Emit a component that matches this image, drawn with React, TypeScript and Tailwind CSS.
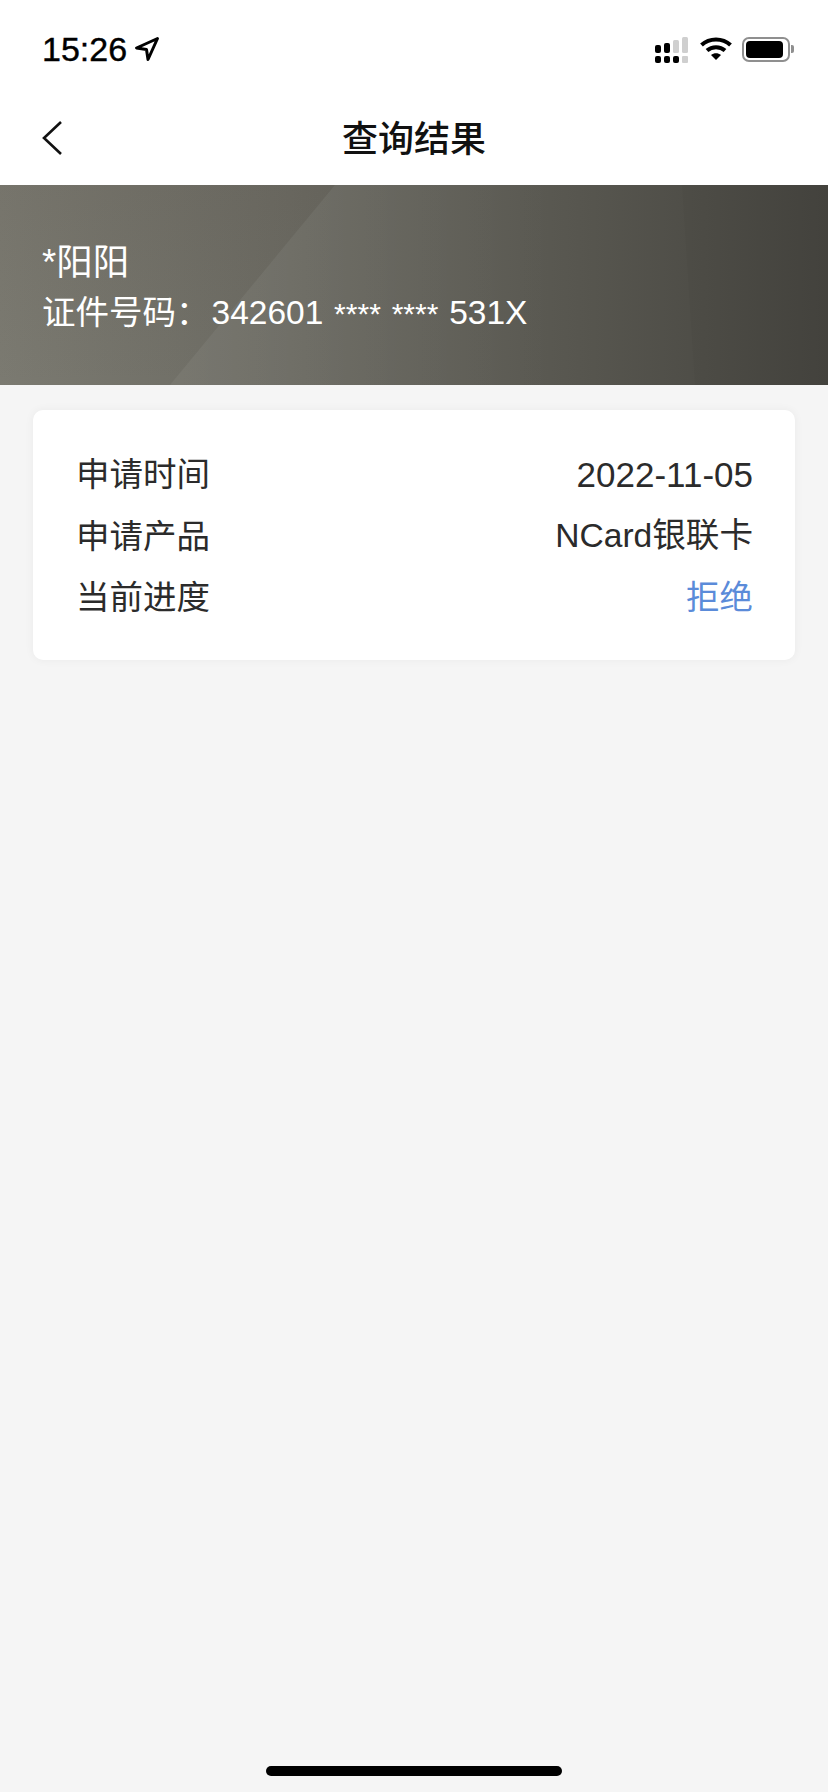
const cjk = "font-['Liberation_Sans','Noto_Sans_CJK_SC',sans-serif]";

const rows = [
  { label: "申请时间", value: "2022-11-05", tone: "text-[#2b2b2b] text-[35px]" },
  { label: "申请产品", value: "NCard银联卡", tone: "text-[#2b2b2b] text-[33.6px]" },
  { label: "当前进度", value: "拒绝", tone: "text-[#5b8bd9]" },
];

function LocationArrow() {
  return (
    <svg width="26" height="26" viewBox="0 0 26 26" fill="none" className="ml-[7px]">
      <path d="M23.5 2.5 L2.5 12 L12.5 13.5 L14 23.5 Z" stroke="#000" strokeWidth="3" strokeLinejoin="round" />
    </svg>
  );
}

function StatusIcons() {
  return (
    <div className="flex items-center">
      <svg width="34" height="26" viewBox="0 0 34 26" className="translate-y-[1px]">
        <rect x="0" y="8" width="6" height="8" rx="2" fill="#000" />
        <rect x="9" y="6" width="6" height="10" rx="2" fill="#000" />
        <rect x="18" y="3" width="6" height="13" rx="1.5" fill="#cfcfcf" />
        <rect x="27" y="0" width="6" height="16" rx="1.5" fill="#cfcfcf" />
        <rect x="0" y="19" width="6" height="7" rx="2" fill="#000" />
        <rect x="9" y="19" width="6" height="7" rx="2" fill="#000" />
        <rect x="18" y="19" width="6" height="7" rx="2" fill="#000" />
        <rect x="27" y="19" width="6" height="7" rx="1" fill="#cfcfcf" />
      </svg>
      <svg width="32" height="24" viewBox="0 0 32 24" className="ml-[11px]">
        <path d="M1.5 8 C9.5 0.5 22.5 0.5 30.5 8" stroke="#000" strokeWidth="4" fill="none" />
        <path d="M7 13.5 C12 9 20 9 25 13.5" stroke="#000" strokeWidth="4" fill="none" />
        <path d="M11 18 C14 15.5 18 15.5 21 18 L16 23 Z" fill="#000" />
      </svg>
      <div className="ml-[10px] flex items-center">
        <div className="flex h-[25px] w-[48px] items-center rounded-[7px] border-2 border-[#8f8f8f] p-[2px]">
          <div className="h-full w-[37px] rounded-[4px] bg-black" />
        </div>
        <div className="ml-[1px] h-[8px] w-[3px] rounded-r-[2px] bg-[#8f8f8f]" />
      </div>
    </div>
  );
}

export default function App() {
  return (
    <div className={`flex min-h-[1792px] flex-col bg-[#f5f5f5] ${cjk}`}>
      <div className="bg-white">
        <div className="flex h-[98px] items-center justify-between pl-[42px] pr-[34px]">
          <div className="flex items-center text-[34px] font-medium leading-none text-black">
            <span className="[-webkit-text-stroke:0.4px_#000]">15:26</span>
            <LocationArrow />
          </div>
          <StatusIcons />
        </div>
        <div className="relative flex h-[87px] items-center justify-center pb-[4px]">
          <svg width="22" height="36" viewBox="0 0 22 36" fill="none" className="absolute left-[41px] top-[22px]">
            <path d="M20 2 L3 18 L20 34" stroke="#111" strokeWidth="2.6" />
          </svg>
          <h1 className="text-[36px] font-medium leading-none text-[#111]">查询结果</h1>
        </div>
      </div>

      <div className="relative h-[200px] overflow-hidden bg-[linear-gradient(90deg,#7b7a71_0%,#6b6a62_35%,#57564f_70%,#45443f_100%)]">
        <svg width="828" height="200" viewBox="0 0 828 200" className="absolute inset-0">
          <defs>
            <linearGradient id="sheen" x1="0" y1="0" x2="1" y2="0">
              <stop offset="0" stopColor="#fff" stopOpacity="0.05" />
              <stop offset="0.6" stopColor="#fff" stopOpacity="0" />
            </linearGradient>
            <linearGradient id="shade" x1="0" y1="0" x2="0" y2="1">
              <stop offset="0" stopColor="#4a4038" stopOpacity="0.1" />
              <stop offset="1" stopColor="#4a4038" stopOpacity="0" />
            </linearGradient>
          </defs>
          <path d="M335 0 L828 0 L828 200 L170 200 Z" fill="url(#sheen)" />
          <path d="M682 0 L828 0 L828 200 L695 200 Z" fill="#000" fillOpacity="0.025" />
          <path d="M0 0 L335 0 L170 200 L0 200 Z" fill="url(#shade)" />
        </svg>
        <div className="relative pl-[42px] pt-[53px] text-white">
          <div className="text-[36.5px] leading-[50px]">*阳阳</div>
          <div className="mt-[2px] text-[33.5px] leading-[46px] [word-spacing:1.5px]">
            证件号码：<span className="ml-[2px]">342601</span> <span className="text-[30px]">****</span>{" "}
            <span className="text-[30px]">****</span> 531X
          </div>
        </div>
      </div>

      <div className="mx-[33px] mt-[25px] rounded-[10px] bg-white pb-[31px] pl-[43px] pr-[42px] pt-[34px] shadow-[0_0_10px_rgba(0,0,0,0.05)]">
        {rows.map((r) => (
          <div key={r.label} className="flex h-[61.5px] items-center justify-between text-[33.5px] leading-none text-[#2b2b2b]">
            <span>{r.label}</span>
            <span className={r.tone}>{r.value}</span>
          </div>
        ))}
      </div>

      <div className="mt-auto flex justify-center pb-[16px]">
        <div className="h-[10px] w-[296px] rounded-full bg-black" />
      </div>
    </div>
  );
}
